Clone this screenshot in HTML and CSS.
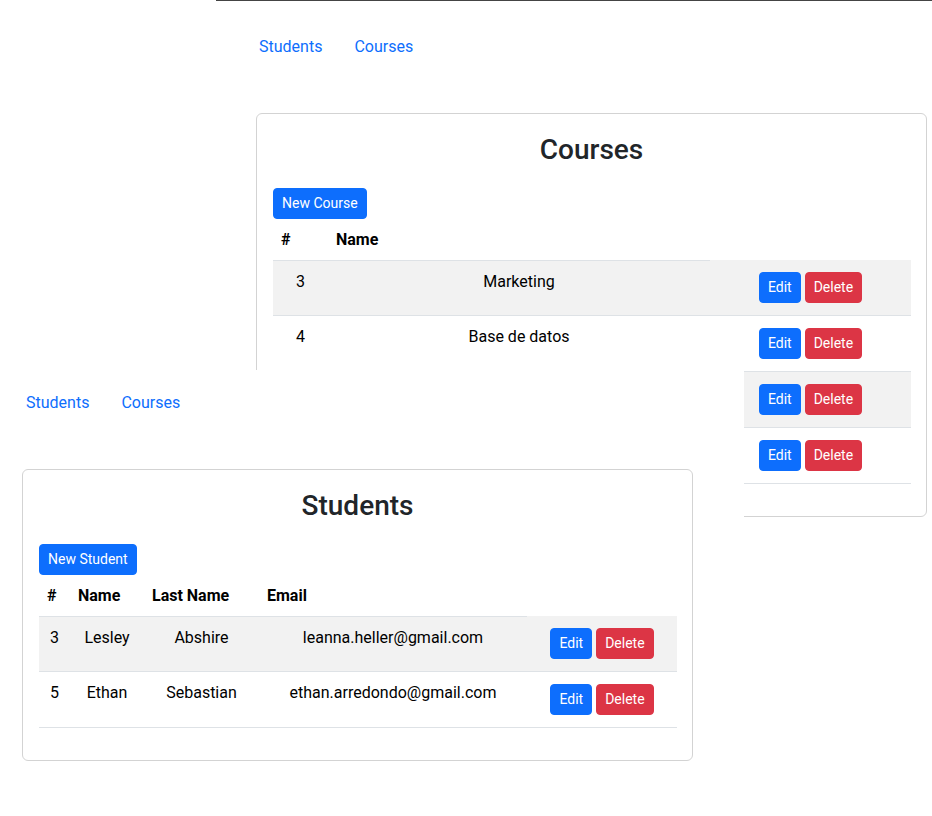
FILE: index.html
```html
<!DOCTYPE html>
<html lang="en">
<head>
<meta charset="utf-8">
<title>Students and Courses</title>
<link rel="stylesheet" href="styles.css">
</head>
<body>
<div class="desk">
  <div class="topline"></div>

  <section class="window win-courses">
    <nav class="nav">
      <a class="nav-link" href="#">Students</a>
      <a class="nav-link" href="#">Courses</a>
    </nav>
    <div class="card">
      <h2 class="title">Courses</h2>
      <div class="toolbar"><a class="btn btn-primary" href="#">New Course</a></div>
      <table class="table">
        <colgroup>
          <col class="c-course-id">
          <col class="c-course-name">
          <col class="c-course-actions">
        </colgroup>
        <thead>
          <tr><th>#</th><th>Name</th></tr>
        </thead>
        <tbody>
          <tr class="striped"><td>3</td><td>Marketing</td><td class="actions"><div class="btns"><a class="btn btn-primary" href="#">Edit</a><a class="btn btn-danger" href="#">Delete</a></div></td></tr>
          <tr><td>4</td><td>Base de datos</td><td class="actions"><div class="btns"><a class="btn btn-primary" href="#">Edit</a><a class="btn btn-danger" href="#">Delete</a></div></td></tr>
          <tr class="striped"><td>5</td><td>Programación</td><td class="actions"><div class="btns"><a class="btn btn-primary" href="#">Edit</a><a class="btn btn-danger" href="#">Delete</a></div></td></tr>
          <tr><td>6</td><td>Diseño</td><td class="actions"><div class="btns"><a class="btn btn-primary" href="#">Edit</a><a class="btn btn-danger" href="#">Delete</a></div></td></tr>
        </tbody>
      </table>
    </div>
  </section>

  <section class="window win-students">
    <nav class="nav">
      <a class="nav-link" href="#">Students</a>
      <a class="nav-link" href="#">Courses</a>
    </nav>
    <div class="card">
      <h2 class="title">Students</h2>
      <div class="toolbar"><a class="btn btn-primary" href="#">New Student</a></div>
      <table class="table">
        <colgroup>
          <col class="c-st-id">
          <col class="c-st-name">
          <col class="c-st-last">
          <col class="c-st-email">
          <col class="c-st-actions">
        </colgroup>
        <thead>
          <tr><th>#</th><th>Name</th><th>Last Name</th><th>Email</th></tr>
        </thead>
        <tbody>
          <tr class="striped"><td>3</td><td>Lesley</td><td>Abshire</td><td>leanna.heller@gmail.com</td><td class="actions"><div class="btns"><a class="btn btn-primary" href="#">Edit</a><a class="btn btn-danger" href="#">Delete</a></div></td></tr>
          <tr><td>5</td><td>Ethan</td><td>Sebastian</td><td>ethan.arredondo@gmail.com</td><td class="actions"><div class="btns"><a class="btn btn-primary" href="#">Edit</a><a class="btn btn-danger" href="#">Delete</a></div></td></tr>
        </tbody>
      </table>
    </div>
  </section>
</div>
</body>
</html>
```
FILE: styles.css
```css
html, body {
  margin: 0;
  padding: 0;
  overflow: hidden;
  background: #fff;
}
body {
  font-family: "Segoe UI", Roboto, "Liberation Sans", sans-serif;
  font-size: 16px;
  line-height: 1.5;
  color: #212529;
}
.desk {
  position: relative;
  width: 932px;
  height: 816px;
  overflow: hidden;
}
.topline {
  position: absolute;
  left: 216px;
  top: 0;
  right: 0;
  height: 1px;
  background: #444;
}
.window {
  position: absolute;
  width: 744px;
  background: #fff;
  box-sizing: border-box;
}
.win-courses {
  left: 234px;
  top: 14px;
  height: 520px;
}
.win-students {
  left: 0;
  top: 370px;
  height: 446px;
}
.nav {
  display: flex;
  padding: 13px 0 0 10px;
}
.nav-link {
  display: block;
  padding: 8px 16px;
  color: #0d6efd;
  text-decoration: none;
}
.win-courses .nav {
  padding-left: 9px;
}
.card {
  margin: 46px 0 0 22px;
  width: 671px;
  box-sizing: border-box;
  border: 1px solid #d3d3d3;
  border-radius: 6px;
  padding: 16px;
}
.title {
  margin: 0 0 21px;
  padding-top: 3px;
  font-size: 28px;
  font-weight: 500;
  line-height: 1.2;
  text-align: center;
  color: #212529;
}
.toolbar {
  display: flex;
}
.btn {
  display: inline-block;
  padding: 4px 8px;
  font-size: 14px;
  line-height: 21px;
  border: 1px solid transparent;
  border-radius: 4px;
  color: #fff;
  text-decoration: none;
  white-space: nowrap;
}
.btn-primary {
  background: #0d6efd;
  border-color: #0d6efd;
}
.btn-danger {
  background: #dc3545;
  border-color: #dc3545;
}
.table {
  width: 100%;
  table-layout: fixed;
  border-collapse: collapse;
  margin-bottom: 16px;
  color: #000;
}
.table th {
  padding: 9px 8px 8px;
  text-align: left;
  font-weight: 700;
  border-bottom: 1px solid #dee2e6;
  vertical-align: top;
}
.table td {
  padding: 9px 8px 8px;
  text-align: center;
  vertical-align: top;
  border-bottom: 1px solid #dee2e6;
}
.table tr.striped td {
  background: #f2f2f2;
}
.table td.actions {
  padding: 12px 8px 12px;
}
.btns {
  display: flex;
  justify-content: center;
  gap: 4px;
}
.c-course-id { width: 55px; }
.c-course-name { width: 382px; }
.c-course-actions { width: 201px; }
.c-st-id { width: 31px; }
.c-st-name { width: 74px; }
.c-st-last { width: 115px; }
.c-st-email { width: 268px; }
.c-st-actions { width: 150px; }
```
